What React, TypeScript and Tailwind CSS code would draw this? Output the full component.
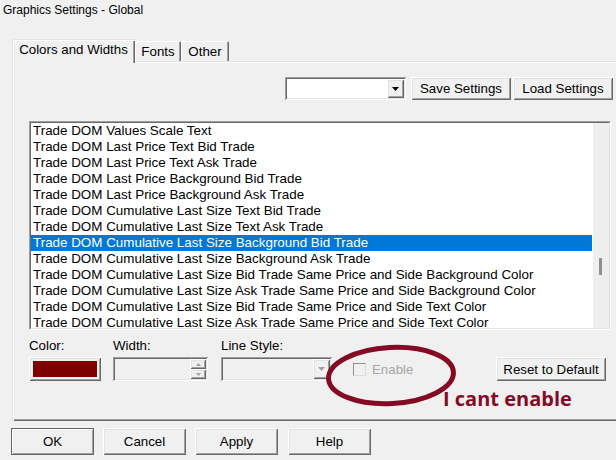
import React from "react";

const RAISED =
  "shadow-[inset_1px_1px_#ffffff,inset_-1px_-1px_#696969,inset_2px_2px_#e3e3e3,inset_-2px_-2px_#a0a0a0]";
const SUNKEN =
  "shadow-[inset_1px_1px_#a0a0a0,inset_-1px_-1px_#ffffff,inset_2px_2px_#696969,inset_-2px_-2px_#e3e3e3]";

const ROWS = [
  "Trade DOM Values Scale Text",
  "Trade DOM Last Price Text Bid Trade",
  "Trade DOM Last Price Text Ask Trade",
  "Trade DOM Last Price Background Bid Trade",
  "Trade DOM Last Price Background Ask Trade",
  "Trade DOM Cumulative Last Size Text Bid Trade",
  "Trade DOM Cumulative Last Size Text Ask Trade",
  "Trade DOM Cumulative Last Size Background Bid Trade",
  "Trade DOM Cumulative Last Size Background Ask Trade",
  "Trade DOM Cumulative Last Size Bid Trade Same Price and Side Background Color",
  "Trade DOM Cumulative Last Size Ask Trade Same Price and Side Background Color",
  "Trade DOM Cumulative Last Size Bid Trade Same Price and Side Text Color",
  "Trade DOM Cumulative Last Size Ask Trade Same Price and Side Text Color",
];

function Arrow({ color, w = 7, h = 4 }: { color: string; w?: number; h?: number }) {
  return (
    <svg width={w} height={h} viewBox={`0 0 ${w} ${h}`}>
      <polygon points={`0,0 ${w},0 ${w / 2},${h}`} fill={color} />
    </svg>
  );
}

function Btn({ children, className }: { children: React.ReactNode; className: string }) {
  return (
    <div className={`flex items-center justify-center bg-[#f0f0f0] ${RAISED} ${className}`}>{children}</div>
  );
}

export default function App() {
  return (
    <div className="relative h-[460px] w-[616px] overflow-hidden bg-[#f0f0f0] font-[family-name:Liberation_Sans,Arial,sans-serif] text-[13.3px] leading-[15px] text-black">
      <div className="h-[39px] pl-[3px] pt-[2px] text-[12px] leading-[16px]">Graphics Settings - Global</div>

      <div className="flex h-[22px] pl-[12px]">
        <div className="relative z-10 h-[24px] w-[123px] rounded-t-[2px] bg-[#f0f0f0] pt-[3px] text-center shadow-[inset_1px_1px_#e3e3e3,inset_2px_2px_#ffffff,inset_-1px_0_#696969,inset_-2px_0_#a0a0a0]">
          Colors and Widths
        </div>
        <div className="mt-[2px] h-[20px] w-[46px] rounded-t-[2px] pt-[3px] text-center shadow-[inset_1px_1px_#ffffff,inset_-1px_0_#696969,inset_-2px_0_#a0a0a0]">
          Fonts
        </div>
        <div className="mt-[2px] h-[20px] w-[48px] rounded-t-[2px] pt-[3px] text-center shadow-[inset_1px_1px_#ffffff,inset_-1px_0_#696969,inset_-2px_0_#a0a0a0]">
          Other
        </div>
      </div>

      <div className="ml-[12px] flex h-[360px] w-[620px] flex-col shadow-[inset_1px_1px_#e3e3e3,inset_2px_2px_#ffffff,inset_-1px_-1px_#696969,inset_-2px_-2px_#a0a0a0]">
        <div className="ml-[273px] mt-[16px] flex h-[23px]">
          <div className={`flex h-[23px] w-[121px] justify-end bg-white p-[2px] ${SUNKEN}`}>
            <div className={`flex w-[17px] items-center justify-center bg-[#f0f0f0] ${RAISED}`}>
              <Arrow color="#000000" />
            </div>
          </div>
          <Btn className="ml-[5px] h-[23px] w-[100px]">Save Settings</Btn>
          <Btn className="ml-[2px] h-[23px] w-[100px]">Load Settings</Btn>
        </div>

        <div className="ml-[17px] mt-[21px] h-[209px] w-[582px] border border-b-white border-l-[#a0a0a0] border-r-white border-t-[#a0a0a0]">
          <div className="flex h-full overflow-hidden border border-b-[#e3e3e3] border-l-[#696969] border-r-[#e3e3e3] border-t-[#696969] bg-white">
            <div className="w-[562px] text-[13.4px]">
              {ROWS.map((r, i) => (
                <div
                  key={i}
                  className={`h-[16px] whitespace-nowrap pl-[2px] leading-[16px] ${
                    i === 7 ? "bg-[#0078d7] text-white" : ""
                  }`}
                >
                  {r}
                </div>
              ))}
            </div>
            <div className="ml-[1px] flex w-[16px] flex-col bg-[#eeeeee] pl-[6px] pt-[135px]">
              <div className="h-[17px] w-[3px] bg-[#8f8f8f]" />
            </div>
          </div>
        </div>

        <div className="ml-[17px] mt-[8px] flex items-end">
          <div className="flex w-[72px] flex-col">
            <div className="h-[15px]">Color:</div>
            <div className={`mt-[4px] h-[24px] bg-[#f0f0f0] p-[4px] ${RAISED}`}>
              <div className="h-full bg-[#800000]" />
            </div>
          </div>
          <div className="ml-[12px] flex w-[95px] flex-col">
            <div className="h-[15px]">Width:</div>
            <div className={`mt-[4px] flex h-[24px] justify-end bg-[#f0f0f0] p-[2px] ${SUNKEN}`}>
              <div className="flex w-[16px] flex-col">
                <div className={`flex h-[10px] items-center justify-center ${RAISED}`}>
                  <svg width="5" height="3" viewBox="0 0 5 3">
                    <polygon points="0,3 5,3 2.5,0" fill="#a0a0a0" />
                  </svg>
                </div>
                <div className={`flex h-[10px] items-center justify-center ${RAISED}`}>
                  <Arrow color="#a0a0a0" w={5} h={3} />
                </div>
              </div>
            </div>
          </div>
          <div className="ml-[13px] flex w-[111px] flex-col">
            <div className="h-[15px]">Line Style:</div>
            <div className={`mt-[4px] flex h-[24px] justify-end bg-[#f0f0f0] p-[2px] ${SUNKEN}`}>
              <div className={`flex w-[17px] items-center justify-center bg-[#f0f0f0] ${RAISED}`}>
                <Arrow color="#a0a0a0" />
              </div>
            </div>
          </div>
          <div className="ml-[21px] flex h-[24px] w-[143px] items-center">
            <div className="h-[13px] w-[13px] border border-b-[#dcdcdc] border-l-[#8f8f8f] border-r-[#dcdcdc] border-t-[#8f8f8f] bg-[#f0f0f0]" />
            <div className="ml-[6px] text-[#a6a6a6]">Enable</div>
          </div>
          <Btn className="h-[24px] w-[110px]">Reset to Default</Btn>
        </div>
      </div>

      <div className="mt-[7px] flex pl-[11px]">
        <div className={`flex h-[27px] w-[83px] items-center justify-center border border-[#646464] bg-[#f0f0f0] shadow-[inset_1px_1px_#ffffff,inset_-1px_-1px_#a0a0a0]`}>
          OK
        </div>
        <Btn className="ml-[9px] h-[27px] w-[83px]">Cancel</Btn>
        <Btn className="ml-[9px] h-[27px] w-[83px]">Apply</Btn>
        <Btn className="ml-[10px] h-[27px] w-[83px]">Help</Btn>
      </div>

      <svg className="absolute left-[324px] top-[343px]" width="136" height="66" viewBox="0 0 136 66">
        <ellipse
          cx="67"
          cy="32.5"
          rx="62.5"
          ry="28"
          fill="none"
          stroke="#850a24"
          strokeWidth="5"
          transform="rotate(-3 67 32.5)"
        />
      </svg>
      <div className="absolute left-[443px] top-[389px] whitespace-nowrap font-[family-name:Open_Sans,sans-serif] text-[20px] font-bold leading-[20px] text-[#850a24]">
        I cant enable
      </div>
    </div>
  );
}
